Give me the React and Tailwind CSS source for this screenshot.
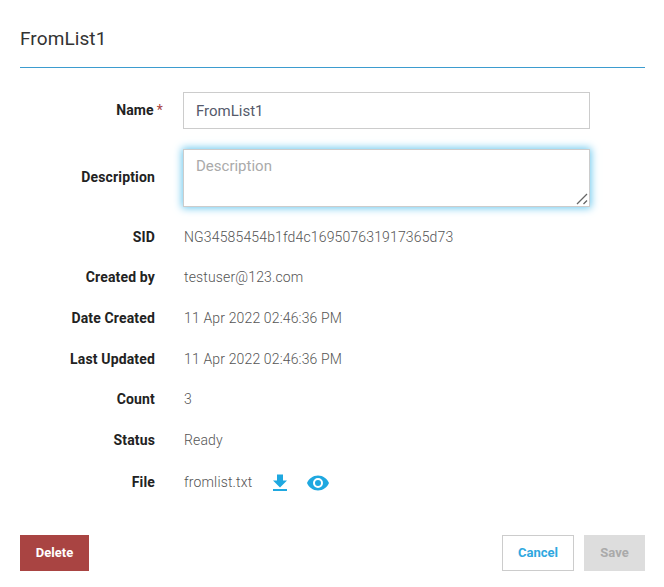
import React from "react";

const labelCls = "w-[135px] text-right text-[14px] font-bold text-[#222] tracking-[0.15px]";

function Row({ label, children, className = "" }) {
  return (
    <div className={"flex items-center h-[21px] mb-[19.6px] " + className}>
      <div className={labelCls}>{label}</div>
      <div className="ml-[29px] flex items-center text-[14px] font-light text-[#555] tracking-[0.15px]">{children}</div>
    </div>
  );
}

export default function App() {
  return (
    <div className="w-[664px] h-[587px] bg-white pl-5 pr-[19px] font-['Roboto',sans-serif] flex flex-col">
      <div className="h-[68px] shrink-0 border-b border-[#3d9ccf] pt-[27px] text-[19px] leading-[24px] tracking-[0.1px] text-[#333]">FromList1</div>
      <div className="mt-6 flex items-center h-[37px]">
        <div className={labelCls}>
          Name<span className="text-[#a94442] font-normal ml-[3px] mr-[-8px]">*</span>
        </div>
        <input
          readOnly
          value="FromList1"
          className="ml-[28px] w-[407px] h-[37px] border border-[#ccc] px-3 text-[15px] text-[#555a6b] outline-none"
        />
      </div>
      <div className="mt-5 mb-[19.8px] flex items-center">
        <div className={labelCls + " -mt-[2px]"}>Description</div>
        <div className="relative ml-[28px] w-[407px] h-[58px]">
          <textarea
            placeholder="Description"
            className="block w-full h-full resize-none border border-[#ccc] px-3 py-[6px] text-[15px] leading-[21px] placeholder:text-[#aaa] outline-none shadow-[0_0_8px_1px_#66c6ee]"
          />
          <svg className="absolute right-[2px] bottom-[2px] pointer-events-none" width="12" height="12" viewBox="0 0 12 12" stroke="#666" strokeWidth="1.300" fill="none">
            <path d="M1 11 L11 1 M7.500 11 L11 7.500" />
          </svg>
        </div>
      </div>
      <Row label="SID">NG34585454b1fd4c169507631917365d73</Row>
      <Row label="Created by">testuser@123.com</Row>
      <Row label="Date Created">11 Apr 2022 02:46:36 PM</Row>
      <Row label="Last Updated">11 Apr 2022 02:46:36 PM</Row>
      <Row label="Count">3</Row>
      <Row label="Status">Ready</Row>
      <Row label="File" className="mt-[1.4px]">
        fromlist.txt
        <svg className="ml-[19px] mt-[2px]" width="18" height="18" viewBox="0 0 18 18" fill="#1fa8e0">
          <path d="M6 1h6v6h4l-7 7-7-7h4z" transform="translate(0 -0.5)" />
          <rect x="2" y="15" width="14" height="2" />
        </svg>
        <svg className="ml-[17px] mt-[2px]" width="24" height="16" viewBox="0 0 24 16" fill="#1fa8e0">
          <path d="M12 .5C7 .5 2.700 3.800 1 8c1.700 4.200 6 7.500 11 7.500s9.300-3.300 11-7.500C21.300 3.800 17 .5 12 .5zm0 12.500a5 5 0 1 1 0-10 5 5 0 0 1 0 10zm0-8a3 3 0 1 0 0 6 3 3 0 0 0 0-6z" />
        </svg>
      </Row>
      <div className="mt-[22.3px] flex items-center">
        <button className="w-[69px] h-[36px] bg-[#a94442] text-white text-[13px] font-bold">Delete</button>
        <div className="ml-auto flex gap-[10px]">
          <button className="w-[72px] h-[36px] border border-[#ccc] bg-white text-[#2fa8e0] text-[13px] font-bold">Cancel</button>
          <button className="w-[61px] h-[36px] bg-[#ddd] text-[#aaa] text-[13px] font-bold">Save</button>
        </div>
      </div>
    </div>
  );
}
